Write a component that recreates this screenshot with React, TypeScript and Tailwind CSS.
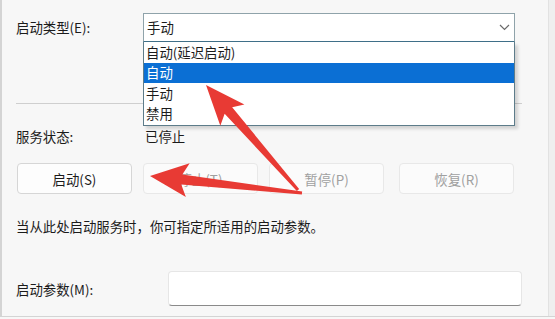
import React from "react"

type Pt = [number, number]

// builds a tapered arrow polygon from tail to tip
function arrowPoints(tail: Pt, tip: Pt, headLen: number, headHalf: number, neck: number, tailW: number) {
  const dx = tip[0] - tail[0]
  const dy = tip[1] - tail[1]
  const len = Math.hypot(dx, dy)
  const ux = dx / len
  const uy = dy / len
  const nx = -uy
  const ny = ux
  const bx = tip[0] - ux * headLen
  const by = tip[1] - uy * headLen
  const pts: Pt[] = [
    tip,
    [bx + nx * headHalf, by + ny * headHalf],
    [bx + ux * 6 + nx * neck, by + uy * 6 + ny * neck],
    [tail[0] + nx * tailW, tail[1] + ny * tailW],
    [tail[0] - nx * tailW, tail[1] - ny * tailW],
    [bx + ux * 6 - nx * neck, by + uy * 6 - ny * neck],
    [bx - nx * headHalf, by - ny * headHalf],
  ]
  return pts.map((p) => p.join(",")).join(" ")
}

function Button({ label, disabled }: { label: string; disabled?: boolean }) {
  return (
    <div
      className={
        "flex h-[31px] w-[115px] items-center justify-center rounded-[4px] border " +
        (disabled ? "border-[#e8e8e8] bg-[#fbfbfb] text-[#a0a0a0]" : "border-[#d6d6d6] bg-[#fdfdfd] text-[#1b1b1b]")
      }
    >
      {label}
    </div>
  )
}

export default function App() {
  const options = ["自动(延迟启动)", "自动", "手动", "禁用"]
  return (
    <div
      className="relative h-[319px] w-[555px] overflow-hidden bg-[#f7f7f7] text-[13.4px] text-[#1b1b1b]"
      style={{ fontFamily: '"Noto Sans CJK SC", "Noto Sans", sans-serif' }}
    >
      <div className="flex h-[317px] border-b border-l-2 border-[#d4d4d4]">
        <div className="flex flex-1 flex-col pl-[14px]">
          <div className="mt-[13px] flex items-center">
            <span className="w-[127px]">启动类型(E):</span>
            <div className="relative">
              <div className="flex h-[29px] w-[372px] items-center justify-between border border-[#8fa3aa] border-b-[#3f6f88] bg-white pr-[4px] pl-[3px]">
                <span>手动</span>
                <svg width="11" height="7" viewBox="0 0 11 7" fill="none" stroke="#6a6a6a" strokeWidth="1.2">
                  <path d="M1 1l4.5 4.5L10 1" />
                </svg>
              </div>
              <div className="absolute top-[29px] left-0 z-10 flex w-[372px] flex-col border border-t-0 border-[#5d7c8a] bg-white pb-[1px] shadow-[3px_3px_3px_rgba(0,0,0,0.15)]">
                {options.map((o, i) => (
                  <div
                    key={o}
                    className={
                      "flex h-[20.5px] items-center pl-[2px] leading-none " +
                      (i === 1 ? "bg-[#0b6fd4] text-white" : "")
                    }
                  >
                    {o}
                  </div>
                ))}
              </div>
            </div>
          </div>
          <div className="mt-[61px] mr-[26px] h-px bg-[#cfcfcf]" />
          <div className="mt-[22px] flex items-center">
            <span className="w-[129px]">服务状态:</span>
            <span>已停止</span>
          </div>
          <div className="mt-[17px] flex gap-[11px] pl-[1px]">
            <Button label="启动(S)" />
            <Button label="停止(T)" disabled />
            <Button label="暂停(P)" disabled />
            <div className="ml-[4px]">
              <Button label="恢复(R)" disabled />
            </div>
          </div>
          <div className="mt-[22px]">当从此处启动服务时，你可指定所适用的启动参数。</div>
          <div className="mt-[35px] flex items-center">
            <span className="w-[152px]">启动参数(M):</span>
            <div className="h-[35px] w-[354px] rounded-[4px] border border-[#e6e6e6] border-b-[#8a8a8a] bg-white" />
          </div>
        </div>
        <div className="w-[7px] border-l border-[#e2e2e2] bg-[#efefef]" />
      </div>
      <svg className="pointer-events-none absolute top-0 left-0 z-20" width="555" height="319">
        <polygon points={arrowPoints([298, 190], [206, 85], 40, 16, 5, 1.5)} fill="#e83a34" />
        <polygon points={arrowPoints([302, 193], [150, 176], 38, 17, 5, 1.5)} fill="#e83a34" />
      </svg>
    </div>
  )
}
